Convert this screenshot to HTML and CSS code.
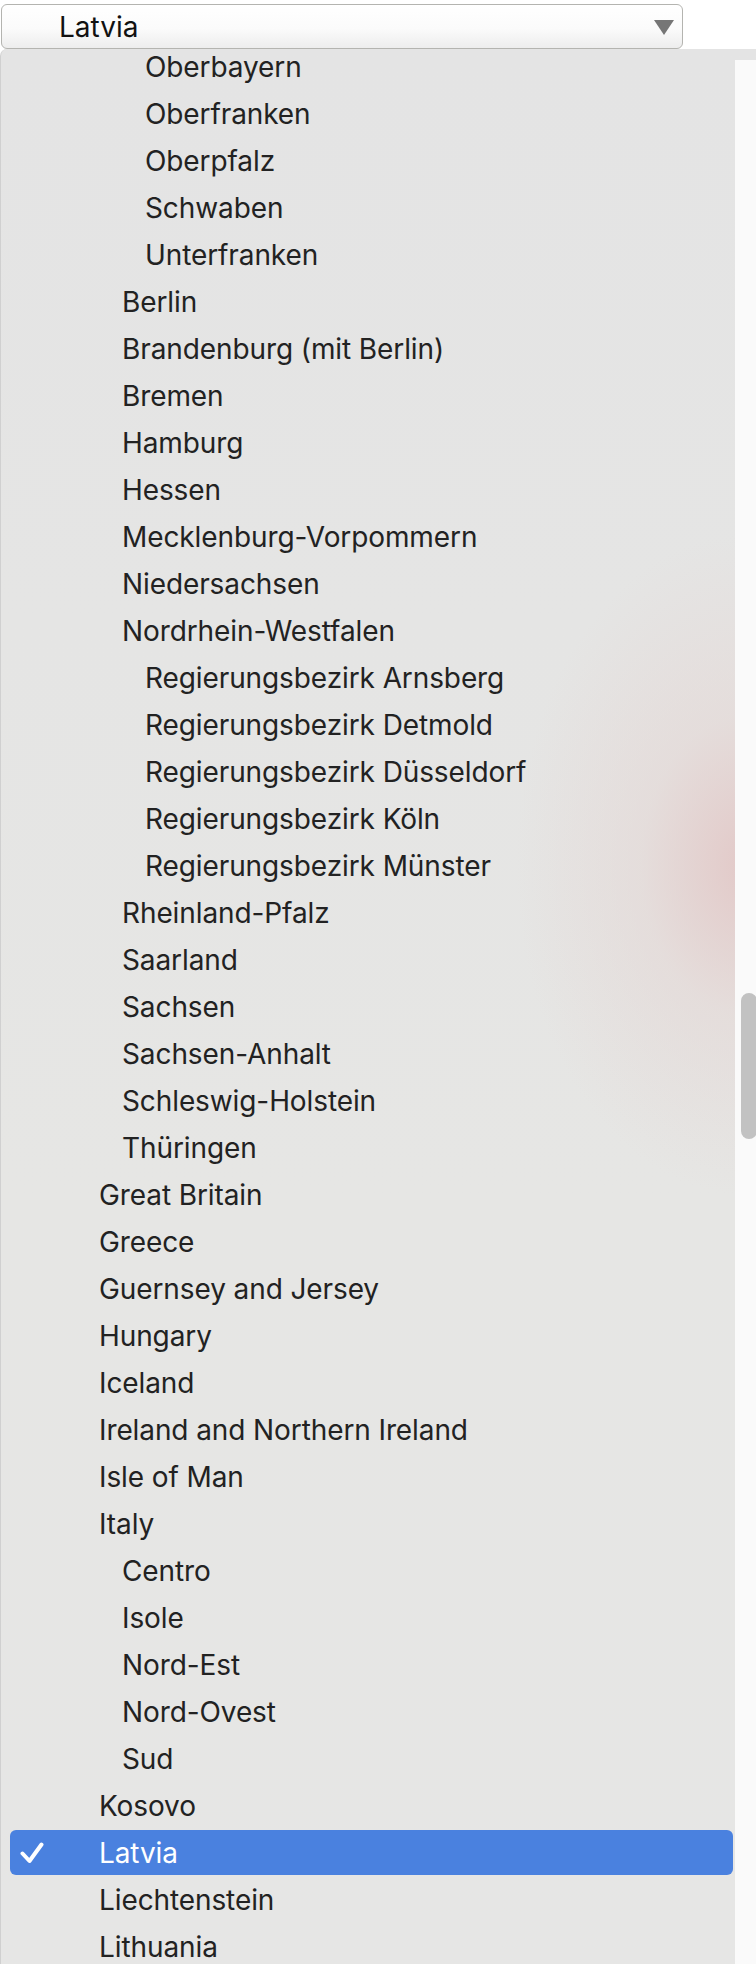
FILE: index.html
```html
<!DOCTYPE html>
<html>
<head>
<meta charset="utf-8">
<link rel="stylesheet" href="styles.css">
</head>
<body>
<div class="select">
  <span class="select-value">Latvia</span>
  <span class="select-arrow"></span>
</div>
<div class="menu">
  <div class="list">
    <div class="row l2">Oberbayern</div>
    <div class="row l2">Oberfranken</div>
    <div class="row l2">Oberpfalz</div>
    <div class="row l2">Schwaben</div>
    <div class="row l2">Unterfranken</div>
    <div class="row l1">Berlin</div>
    <div class="row l1">Brandenburg (mit Berlin)</div>
    <div class="row l1">Bremen</div>
    <div class="row l1">Hamburg</div>
    <div class="row l1">Hessen</div>
    <div class="row l1">Mecklenburg-Vorpommern</div>
    <div class="row l1">Niedersachsen</div>
    <div class="row l1">Nordrhein-Westfalen</div>
    <div class="row l2">Regierungsbezirk Arnsberg</div>
    <div class="row l2">Regierungsbezirk Detmold</div>
    <div class="row l2">Regierungsbezirk Düsseldorf</div>
    <div class="row l2">Regierungsbezirk Köln</div>
    <div class="row l2">Regierungsbezirk Münster</div>
    <div class="row l1">Rheinland-Pfalz</div>
    <div class="row l1">Saarland</div>
    <div class="row l1">Sachsen</div>
    <div class="row l1">Sachsen-Anhalt</div>
    <div class="row l1">Schleswig-Holstein</div>
    <div class="row l1">Thüringen</div>
    <div class="row l0">Great Britain</div>
    <div class="row l0">Greece</div>
    <div class="row l0">Guernsey and Jersey</div>
    <div class="row l0">Hungary</div>
    <div class="row l0">Iceland</div>
    <div class="row l0">Ireland and Northern Ireland</div>
    <div class="row l0">Isle of Man</div>
    <div class="row l0">Italy</div>
    <div class="row l1">Centro</div>
    <div class="row l1">Isole</div>
    <div class="row l1">Nord-Est</div>
    <div class="row l1">Nord-Ovest</div>
    <div class="row l1">Sud</div>
    <div class="row l0">Kosovo</div>
    <div class="row l0 selected"><svg class="check" width="24" height="22" viewBox="0 0 24 22"><path d="M2.5 11.5 L9.5 19 L21.5 2.5" fill="none" stroke="#ffffff" stroke-width="4" stroke-linecap="round" stroke-linejoin="round"/></svg>Latvia</div>
    <div class="row l0">Liechtenstein</div>
    <div class="row l0">Lithuania</div>
  </div>
  <div class="track"><div class="thumb"></div></div>
</div>
</body>
</html>
```
FILE: styles.css
```css
html, body {
  margin: 0;
  padding: 0;
  background: #ffffff;
  height: 1964px;
  overflow: hidden;
}
body {
  font-family: "Inter", "Noto Sans", sans-serif;
  color: #222222;
}
.select {
  box-sizing: border-box;
  margin: 4px 0 0 1px;
  width: 682px;
  height: 45px;
  border: 1px solid #b4b4b0;
  border-radius: 6px;
  background: linear-gradient(#ffffff 0%, #fbfbfb 55%, #ededed 100%);
  display: flex;
  align-items: center;
  justify-content: space-between;
  padding: 0 8px 0 57px;
}
.select-value {
  font-size: 28px;
  color: #111111;
}
.select-arrow {
  width: 0;
  height: 0;
  border-left: 10px solid transparent;
  border-right: 10px solid transparent;
  border-top: 15px solid #767676;
  margin-top: 2px;
}
.menu {
  display: flex;
  height: 1915px;
  overflow: hidden;
  border-top-left-radius: 7px;
  background:
    radial-gradient(ellipse 230px 330px at 745px 816px, rgba(226, 198, 197, 0.9) 0%, rgba(228, 214, 212, 0.55) 45%, rgba(230, 231, 226, 0) 100%),
    linear-gradient(#e4e4e4 0%, #e6e6e4 60%, #e6e6e5 100%);
  border-left: 1px solid #d0d0d0;
}
.list {
  width: 734px;
  flex: none;
  margin-top: -6px;
  display: flex;
  flex-direction: column;
}
.row {
  height: 47px;
  flex: none;
  display: flex;
  align-items: center;
  font-size: 28px;
  letter-spacing: -0.1px;
  position: relative;
  white-space: nowrap;
}
.l0 { padding-left: 98px; }
.l1 { padding-left: 121px; }
.l2 { padding-left: 144px; }
.selected {
  background: #4a81df;
  color: #ffffff;
  border-radius: 6px;
  margin: 1px 2px 1px 9px;
  height: 45px;
  padding-left: 89px;
}
.check {
  position: absolute;
  left: 10px;
  top: 12px;
}
.track {
  flex: 1;
  background: #fafafa;
  margin-top: 11px;
  position: relative;
}
.thumb {
  position: absolute;
  left: 6px;
  width: 16px;
  top: 933px;
  height: 146px;
  border-radius: 8px;
  background: #c2c2c2;
}
```
